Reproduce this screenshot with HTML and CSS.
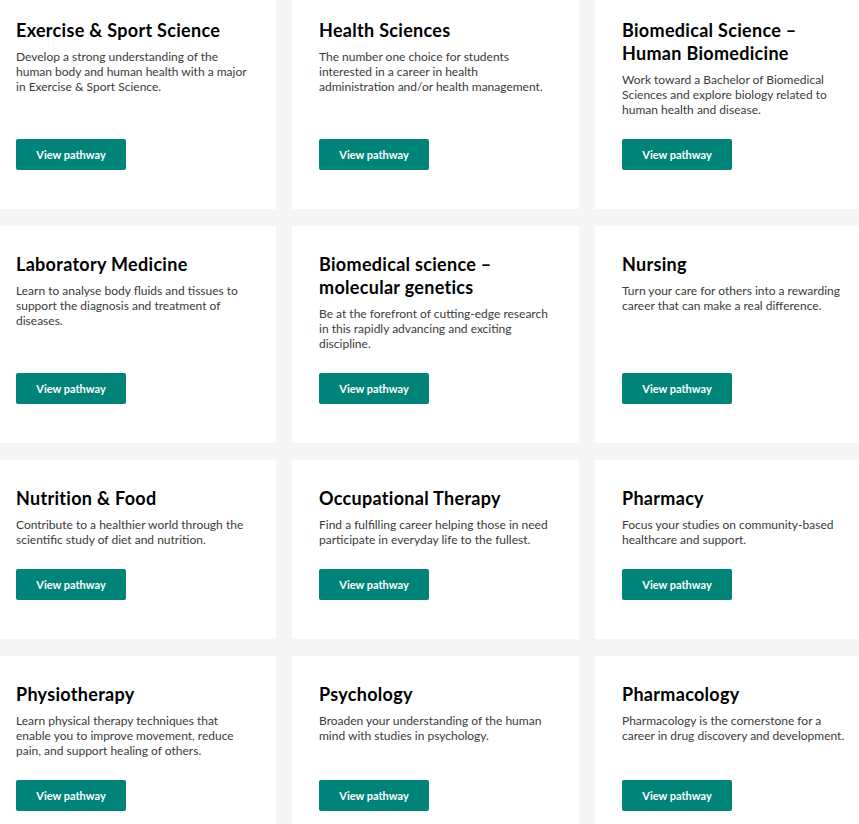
FILE: index.html
```html
<!DOCTYPE html>
<html lang="en">
<head>
<meta charset="utf-8">
<title>Pathways</title>
<link rel="stylesheet" href="styles.css">
</head>
<body>
<main class="grid">
  <article class="card">
    <h3 class="card-title">Exercise &amp; Sport Science</h3>
    <p class="card-text">Develop a strong understanding of the human body and human health with a major in Exercise &amp; Sport Science.</p>
    <a class="btn" href="#">View pathway</a>
  </article>
  <article class="card">
    <h3 class="card-title">Health Sciences</h3>
    <p class="card-text">The number one choice for students interested in a career in health administration and/or health management.</p>
    <a class="btn" href="#">View pathway</a>
  </article>
  <article class="card">
    <h3 class="card-title">Biomedical Science – Human Biomedicine</h3>
    <p class="card-text">Work toward a Bachelor of Biomedical Sciences and explore biology related to human health and disease.</p>
    <a class="btn" href="#">View pathway</a>
  </article>

  <article class="card">
    <h3 class="card-title">Laboratory Medicine</h3>
    <p class="card-text">Learn to analyse body fluids and tissues to support the diagnosis and treatment of diseases.</p>
    <a class="btn" href="#">View pathway</a>
  </article>
  <article class="card">
    <h3 class="card-title">Biomedical science – molecular genetics</h3>
    <p class="card-text">Be at the forefront of cutting-edge research in this rapidly advancing and exciting discipline.</p>
    <a class="btn" href="#">View pathway</a>
  </article>
  <article class="card">
    <h3 class="card-title">Nursing</h3>
    <p class="card-text">Turn your care for others into a rewarding career that can make a real difference.</p>
    <a class="btn" href="#">View pathway</a>
  </article>

  <article class="card">
    <h3 class="card-title">Nutrition &amp; Food</h3>
    <p class="card-text">Contribute to a healthier world through the scientific study of diet and nutrition.</p>
    <a class="btn" href="#">View pathway</a>
  </article>
  <article class="card">
    <h3 class="card-title">Occupational Therapy</h3>
    <p class="card-text">Find a fulfilling career helping those in need participate in everyday life to the fullest.</p>
    <a class="btn" href="#">View pathway</a>
  </article>
  <article class="card">
    <h3 class="card-title">Pharmacy</h3>
    <p class="card-text">Focus your studies on community-based healthcare and support.</p>
    <a class="btn" href="#">View pathway</a>
  </article>

  <article class="card">
    <h3 class="card-title">Physiotherapy</h3>
    <p class="card-text">Learn physical therapy techniques that enable you to improve movement, reduce pain, and support healing of others.</p>
    <a class="btn" href="#">View pathway</a>
  </article>
  <article class="card">
    <h3 class="card-title">Psychology</h3>
    <p class="card-text">Broaden your understanding of the human mind with studies in psychology.</p>
    <a class="btn" href="#">View pathway</a>
  </article>
  <article class="card">
    <h3 class="card-title">Pharmacology</h3>
    <p class="card-text">Pharmacology is the cornerstone for a career in drug discovery and development.</p>
    <a class="btn" href="#">View pathway</a>
  </article>
</main>
</body>
</html>
```
FILE: styles.css
```css
html, body {
  margin: 0;
  padding: 0;
}
body {
  background: #f5f5f5;
  font-family: "Lato", "Liberation Sans", sans-serif;
  overflow: hidden;
}
.grid {
  display: grid;
  grid-template-columns: repeat(3, 287px);
  column-gap: 16px;
  row-gap: 17px;
  margin: -8px 0 0 -11px;
}
.card {
  background: #fff;
  padding: 27px 27px 39px;
  display: flex;
  flex-direction: column;
  align-items: flex-start;
}
.card-title {
  margin: 0 0 7px;
  font-size: 18px;
  line-height: 23px;
  font-weight: 700;
  color: #000;
  letter-spacing: 0.3px;
}
.card-text {
  margin: 0 0 22px;
  font-size: 12px;
  line-height: 15px;
  color: #3a3a3a;
}
.btn {
  margin-top: auto;
  width: 110px;
  height: 31px;
  display: flex;
  align-items: center;
  justify-content: center;
  background: #00847a;
  color: #fff;
  border-radius: 2px;
  font-size: 11px;
  font-weight: 700;
  text-decoration: none;
}
```
